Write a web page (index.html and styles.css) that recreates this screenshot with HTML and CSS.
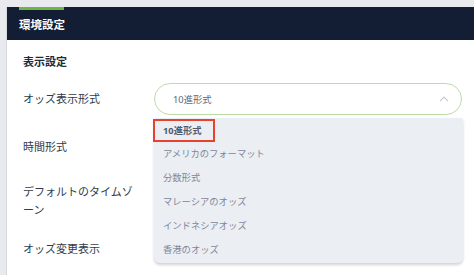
FILE: index.html
```html
<!DOCTYPE html>
<html lang="ja">
<head>
<meta charset="utf-8">
<link rel="stylesheet" href="styles.css">
</head>
<body>
<div class="panel">
  <div class="header">
    <div class="title">環境設定</div>
  </div>
  <div class="content">
    <div class="section-title">表示設定</div>
    <div class="rows">
      <div class="row">
        <div class="label">オッズ表示形式</div>
        <div class="select-wrap">
          <div class="select">
            <span class="value">10進形式</span>
            <svg class="chev" width="10" height="6" viewBox="0 0 10 6"><path d="M1 5.2 L5 1.2 L9 5.2" fill="none" stroke="#c3c8d5" stroke-width="1.2"/></svg>
          </div>
          <div class="dropdown">
            <div class="item first"><span class="hl">10進形式</span></div>
            <div class="item">アメリカのフォーマット</div>
            <div class="item">分数形式</div>
            <div class="item">マレーシアのオッズ</div>
            <div class="item">インドネシアオッズ</div>
            <div class="item">香港のオッズ</div>
          </div>
        </div>
      </div>
      <div class="row">
        <div class="label">時間形式</div>
        <div class="field"></div>
      </div>
      <div class="row tall">
        <div class="label">デフォルトのタイムゾーン</div>
        <div class="field"></div>
      </div>
      <div class="row">
        <div class="label">オッズ変更表示</div>
        <div class="field"></div>
      </div>
    </div>
  </div>
</div>
</body>
</html>
```

FILE: styles.css
```css
* { box-sizing: border-box; }
html, body { margin: 0; padding: 0; }
body {
  background: #e9eaee;
  font-family: "Noto Sans", "Noto Sans CJK JP", sans-serif;
  padding: 7px 0 0 6px;
  height: 275px;
  overflow: hidden;
}
.panel {
  background: #ffffff;
  border-left: 1px solid #d6d9df;
  height: 268px;
}
.header {
  height: 33px;
  padding-top: 3px;
  background:
    linear-gradient(#6db544, #6db544) 12px 0 / 45px 3px no-repeat,
    #131d34;
}
.title {
  color: #ffffff;
  font-size: 11.5px;
  font-weight: 700;
  padding-left: 12px;
  line-height: 30px;
}
.content {
  padding: 14px 12px 0 16px;
}
.section-title {
  font-size: 11px;
  font-weight: 700;
  color: #222a38;
  line-height: 16px;
}
.rows {
  margin-top: 13px;
  display: flex;
  flex-direction: column;
  gap: 16px;
}
.row {
  display: flex;
  align-items: center;
  gap: 15px;
  min-height: 32px;
}
.row.tall {
  min-height: 44px;
  margin-bottom: -6px;
}
.label {
  width: 116px;
  flex: none;
  font-size: 11px;
  line-height: 18px;
  color: #333a48;
}
.field { flex: 1; height: 32px; }
.select-wrap {
  flex: 1;
  position: relative;
}
.select {
  height: 32px;
  border: 1px solid #bcdca6;
  border-radius: 16px;
  display: flex;
  align-items: center;
  justify-content: space-between;
  padding: 0 12px 0 18px;
}
.value {
  font-size: 9.3px;
  color: #5e6677;
}
.chev { display: block; margin-top: -1px; }
.dropdown {
  position: absolute;
  left: 0;
  top: 35px;
  width: 309px;
  background: #ebeef2;
  border-radius: 2px 2px 6px 6px;
  box-shadow: 0 2px 3px rgba(0, 0, 0, 0.18);
  padding: 0 0 1px 0;
  z-index: 2;
}
.item {
  height: 24px;
  line-height: 24px;
  font-size: 9.3px;
  color: #7e8698;
  padding-left: 9px;
}
.item.first { padding-left: 0; height: 24px; }
.hl {
  display: inline-block;
  margin-left: -1px;
  margin-top: 1px;
  height: 23px;
  line-height: 19px;
  border: 2px solid #e8412d;
  padding: 0 11px 0 8px;
  color: #525a6a;
  font-weight: 700;
}
```
